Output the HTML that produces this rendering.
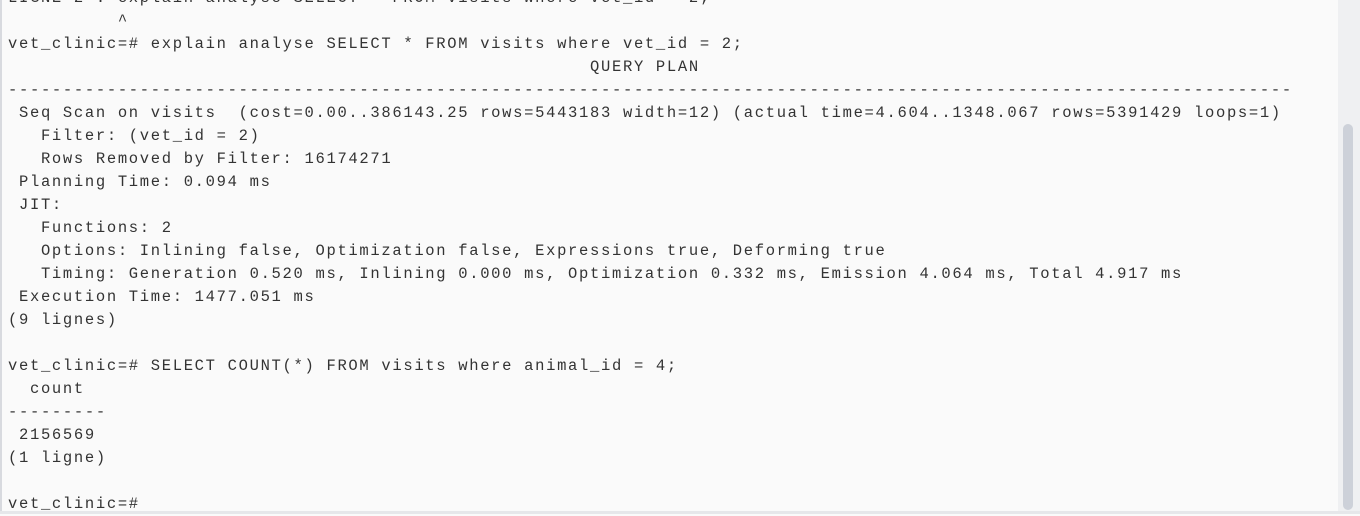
<!DOCTYPE html>
<html><head><meta charset="utf-8"><style>
html,body{margin:0;padding:0;}
body{width:1360px;height:514px;overflow:hidden;background:#fafafa;position:relative;}
.lb{position:absolute;left:0;top:0;width:2px;height:514px;background:#d8dadf;}
.bb{position:absolute;left:0;top:511px;width:1360px;height:3px;background:#e6e7ea;}
.track{position:absolute;left:1338px;top:0;width:22px;height:511px;background:#eff0f2;}
.thumb{position:absolute;left:1343px;top:124px;width:10px;height:386px;background:#cdd1d9;border-radius:5px;}
pre{position:absolute;left:8px;top:-13px;margin:0;font-family:"Liberation Mono",monospace;font-size:15.5px;letter-spacing:1.68px;line-height:23px;color:#333;white-space:pre;}
</style></head><body>
<div class="lb"></div>
<pre>LIGNE 2 : explain analyse SELECT * FROM visits where vet_id = 2;
          ^
vet_clinic=# explain analyse SELECT * FROM visits where vet_id = 2;
                                                     QUERY PLAN
---------------------------------------------------------------------------------------------------------------------
 Seq Scan on visits  (cost=0.00..386143.25 rows=5443183 width=12) (actual time=4.604..1348.067 rows=5391429 loops=1)
   Filter: (vet_id = 2)
   Rows Removed by Filter: 16174271
 Planning Time: 0.094 ms
 JIT:
   Functions: 2
   Options: Inlining false, Optimization false, Expressions true, Deforming true
   Timing: Generation 0.520 ms, Inlining 0.000 ms, Optimization 0.332 ms, Emission 4.064 ms, Total 4.917 ms
 Execution Time: 1477.051 ms
(9 lignes)

vet_clinic=# SELECT COUNT(*) FROM visits where animal_id = 4;
  count
---------
 2156569
(1 ligne)

vet_clinic=#</pre>
<div class="track"></div>
<div class="thumb"></div>
<div class="bb"></div>
</body></html>
